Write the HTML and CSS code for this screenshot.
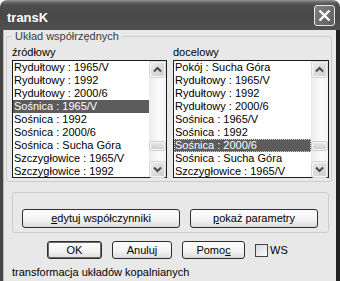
FILE: index.html
```html
<!DOCTYPE html>
<html>
<head>
    <title>transK</title>
    <link rel="stylesheet" href="styles.css">
</head>
<body>
    <div class="window">
        <div class="titlebar">
            <span class="title">transK</span>
            <div class="close-btn">
                <svg width="13" height="13" viewBox="0 0 13 13"><path d="M1.5 1.5 L11.5 11.5 M11.5 1.5 L1.5 11.5" stroke="#fff" stroke-width="2.4"/></svg>
            </div>
        </div>
        <div class="frame">
            <fieldset class="coords">
                <legend>Układ współrzędnych</legend>
                <div class="lists">
                    <div class="list-col">
                        <div class="list-label">źródłowy</div>
                        <div class="listbox">
                            <ul class="items">
                                <li>Rydułtowy : 1965/V</li>
                                <li>Rydułtowy : 1992</li>
                                <li>Rydułtowy : 2000/6</li>
                                <li class="selected">Sośnica : 1965/V</li>
                                <li>Sośnica : 1992</li>
                                <li>Sośnica : 2000/6</li>
                                <li>Sośnica : Sucha Góra</li>
                                <li>Szczygłowice : 1965/V</li>
                                <li>Szczygłowice : 1992</li>
                            </ul>
                            <div class="scrollbar">
                                <div class="sb-btn"><svg width="13" height="13" viewBox="0 0 13 13"><polyline points="3,8.5 6.5,5 10,8.5" fill="none" stroke="#4a4a4a" stroke-width="2"/></svg></div>
                                <div class="sb-track"><div class="sb-thumb"></div></div>
                                <div class="sb-btn"><svg width="13" height="13" viewBox="0 0 13 13"><polyline points="3,4.5 6.5,8 10,4.5" fill="none" stroke="#4a4a4a" stroke-width="2"/></svg></div>
                            </div>
                        </div>
                    </div>
                    <div class="list-col">
                        <div class="list-label">docelowy</div>
                        <div class="listbox">
                            <ul class="items">
                                <li>Pokój : Sucha Góra</li>
                                <li>Rydułtowy : 1965/V</li>
                                <li>Rydułtowy : 1992</li>
                                <li>Rydułtowy : 2000/6</li>
                                <li>Sośnica : 1965/V</li>
                                <li>Sośnica : 1992</li>
                                <li class="selected focused">Sośnica : 2000/6</li>
                                <li>Sośnica : Sucha Góra</li>
                                <li>Szczygłowice : 1965/V</li>
                            </ul>
                            <div class="scrollbar">
                                <div class="sb-btn"><svg width="13" height="13" viewBox="0 0 13 13"><polyline points="3,8.5 6.5,5 10,8.5" fill="none" stroke="#4a4a4a" stroke-width="2"/></svg></div>
                                <div class="sb-track"><div class="sb-thumb"></div></div>
                                <div class="sb-btn"><svg width="13" height="13" viewBox="0 0 13 13"><polyline points="3,4.5 6.5,8 10,4.5" fill="none" stroke="#4a4a4a" stroke-width="2"/></svg></div>
                            </div>
                        </div>
                    </div>
                </div>
            </fieldset>

            <div class="tools">
                <button class="btn btn-edit"><u>e</u>dytuj współczynniki</button>
                <button class="btn btn-show"><u>p</u>okaż parametry</button>
            </div>

            <div class="actions">
                <button class="btn btn-ok">OK</button>
                <button class="btn btn-cancel">Anuluj</button>
                <button class="btn btn-help">Pomo<u>c</u></button>
                <label class="check-label"><span class="check"></span>WS</label>
            </div>

            <div class="status">transformacja układów kopalnianych</div>
        </div>
    </div>
</body>
</html>
```

FILE: styles.css
```css
body {
    margin: 0;
    font-family: 'Liberation Sans', Arial, sans-serif;
    font-size: 11px;
    color: #000;
    background-color: #fff;
}

.window {
    width: 340px;
    height: 281px;
    overflow: hidden;
    display: flex;
    flex-direction: column;
}

.titlebar {
    height: 30px;
    flex: none;
    display: flex;
    align-items: center;
    justify-content: space-between;
    padding: 0 5px 0 7px;
    box-sizing: border-box;
    border-radius: 7px 7px 0 0;
    background: linear-gradient(#9a9a9a 0, #6a6a6a 2px, #4e4e4e 5px, #484848 50%, #505050 100%);
}

.title {
    margin-top: 4px;
    color: #fff;
    font-size: 13px;
    font-weight: bold;
}

.close-btn {
    width: 21px;
    height: 21px;
    box-sizing: border-box;
    border: 1px solid #e6e6e6;
    border-radius: 3px;
    background: linear-gradient(135deg, #808080, #5e5e5e);
    display: flex;
    align-items: center;
    justify-content: center;
}

.frame {
    flex: 1;
    background-color: #e8e8e8;
    border-left: 3px solid #454545;
    border-right: 4px solid #222;
    padding-left: 1px;
    box-shadow: inset 1px 0 0 #b8b8b8;
}

.coords {
    margin: 0 4px 0 2px;
    padding: 3px 2px 3px 5px;
    border: 1px solid #cdcdcd;
    border-radius: 3px;
    min-width: 0;
}

.coords legend {
    padding: 0 3px;
    line-height: 13px;
    color: #3c3c3c;
}

.lists {
    display: grid;
    grid-template-columns: 155px 156px;
    column-gap: 6px;
}

.list-label {
    line-height: 13px;
    margin-bottom: 1px;
}

.listbox {
    height: 118px;
    box-sizing: border-box;
    border: 1px solid #1c1c1c;
    background-color: #fff;
    display: flex;
}

.items {
    flex: 1;
    min-width: 0;
    list-style: none;
    margin: 0;
    padding: 0;
    overflow: hidden;
}

.items li {
    height: 13px;
    line-height: 13px;
    padding-left: 1px;
    white-space: nowrap;
}

.items li.selected {
    background-color: #5c5c5c;
    color: #fff;
}

.items li.focused {
    outline: 1px dotted #d0d0d0;
    outline-offset: -1px;
}

.scrollbar {
    width: 17px;
    flex: none;
    display: flex;
    flex-direction: column;
    box-sizing: border-box;
    padding: 1px 1px 0;
    background: linear-gradient(to right, #ececec, #fbfbfb 60%, #f4f4f4);
}

.sb-btn {
    height: 15px;
    flex: none;
    box-sizing: border-box;
    border: 1px solid #f5f5f5;
    border-radius: 2px;
    background: linear-gradient(135deg, #ebebeb, #cdcdcd);
    box-shadow: 0 0 0 1px #d6d6d6;
    display: flex;
    align-items: center;
    justify-content: center;
}

.sb-track {
    flex: 1;
}

.sb-thumb {
    height: 8px;
    margin-top: 65px;
    box-sizing: border-box;
    border: 1px solid #f5f5f5;
    border-radius: 2px;
    background: linear-gradient(#e6e6e6, #cfcfcf);
    box-shadow: 0 0 0 1px #cdcdcd;
}

.tools {
    display: flex;
    gap: 10px;
    margin: 10px 7px 0 8px;
    padding: 16px 0 4px 9px;
    border: 1px solid #cdcdcd;
    border-radius: 3px;
}

.btn {
    height: 19px;
    box-sizing: border-box;
    padding: 0;
    border: 1px solid #2e2e2e;
    border-radius: 3px;
    background: linear-gradient(#fefefe, #f3f3f3 55%, #e2e2e2 90%, #d4d4d4);
    font-family: inherit;
    font-size: 11px;
    line-height: 17px;
    color: #000;
    text-align: center;
}

.btn-edit {
    width: 158px;
}

.btn-show {
    width: 128px;
}

.actions {
    display: flex;
    align-items: center;
    gap: 10px;
    margin-top: 8px;
    padding-left: 43px;
}

.actions .btn {
    height: 18px;
    line-height: 16px;
}

.btn-ok {
    width: 55px;
    box-shadow: inset 0 0 0 1px #6a6a6a;
}

.btn-cancel {
    width: 60px;
}

.btn-help {
    width: 63px;
}

.check-label {
    display: flex;
    align-items: center;
    gap: 2px;
}

.check {
    width: 13px;
    height: 13px;
    box-sizing: border-box;
    border: 1px solid #444;
    background: linear-gradient(135deg, #d8d8d8, #fafafa);
}

.status {
    margin-top: 7px;
    padding-left: 8px;
    line-height: 13px;
}
```
